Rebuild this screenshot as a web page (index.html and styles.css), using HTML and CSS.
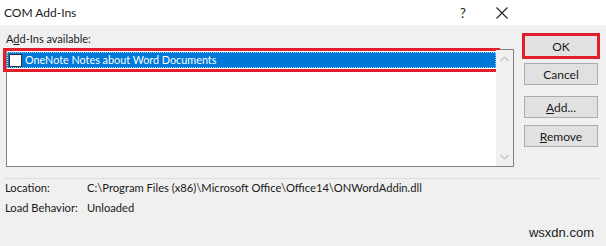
FILE: index.html
```html
<!DOCTYPE html>
<html lang="en">
<head>
  <meta charset="UTF-8">
  <title>COM Add-Ins</title>
  <link rel="stylesheet" href="styles.css">
</head>
<body>

  <div class="dialog">
    <header class="titlebar">
      <span class="title">COM Add-Ins</span>
      <span class="help">?</span>
      <span class="close">
        <svg width="12" height="12" viewBox="0 0 12 12"><path d="M0.5 0.5 L11.5 11.5 M11.5 0.5 L0.5 11.5" stroke="#222" stroke-width="1.1" fill="none"/></svg>
      </span>
    </header>

    <div class="main">
      <div class="list-col">
        <div class="list-label">A<u>d</u>d-Ins available:</div>
        <div class="listbox">
          <div class="items">
            <div class="item selected">
              <span class="check"></span>
              <span class="item-text">OneNote Notes about Word Documents</span>
            </div>
          </div>
          <div class="scrollbar">
            <svg width="9" height="6" viewBox="0 0 9 6"><path d="M0.5 5 L4.5 1 L8.5 5" stroke="#c2c2c2" stroke-width="1.2" fill="none"/></svg>
            <svg width="9" height="6" viewBox="0 0 9 6"><path d="M0.5 1 L4.5 5 L8.5 1" stroke="#c2c2c2" stroke-width="1.2" fill="none"/></svg>
          </div>
        </div>
      </div>

      <div class="buttons">
        <button class="btn btn-ok">OK</button>
        <button class="btn btn-cancel">Cancel</button>
        <button class="btn btn-add"><u>A</u>dd...</button>
        <button class="btn btn-remove"><u>R</u>emove</button>
      </div>
    </div>

    <hr class="sep">

    <div class="info">
      <span class="info-label">Location:</span>
      <span class="info-value">C:\Program Files (x86)\Microsoft Office\Office14\ONWordAddin.dll</span>
      <span class="info-label">Load Behavior:</span>
      <span class="info-value">Unloaded</span>
    </div>

    <div class="watermark">wsxdn.com</div>
  </div>

</body>
</html>
```

FILE: styles.css
```css
body {
  margin: 0;
  background-color: #f0f0f0;
  font-family: Lato, "Noto Sans", sans-serif;
  font-size: 11px;
  color: #1a1a1a;
}

.dialog {
  width: 606px;
  height: 246px;
  overflow: hidden;
}

.titlebar {
  height: 25px;
  background-color: #fff;
  display: flex;
  align-items: center;
  padding-left: 4px;
}

.title {
  flex: 1;
  font-size: 12px;
}

.help {
  width: 12px;
  margin-right: 24px;
  font-size: 13px;
}

.close {
  display: flex;
  margin-right: 98px;
}

.main {
  display: flex;
  padding: 6px 8px 0 6px;
  gap: 10px;
}

.list-col {
  display: flex;
  flex-direction: column;
}

.list-label {
  height: 18px;
  line-height: 16px;
  font-size: 11px;
}

.listbox {
  width: 506px;
  height: 116px;
  border: 1px solid #838383;
  background-color: #fff;
  display: flex;
}

.items {
  flex: 1;
  padding-top: 2px;
}

.item {
  height: 14px;
  display: flex;
  align-items: center;
  color: #fff;
}

.item.selected {
  background-color: #0078d7;
  border: 1px dotted #a7cdf2;
  outline: 3px solid #e01e2c;
  outline-offset: 1px;
}

.check {
  width: 13px;
  height: 13px;
  box-sizing: border-box;
  border: 1px solid #333;
  background-color: #fff;
  margin: 0 3px 0 1px;
}

.item-text {
  line-height: 14px;
  font-size: 10.8px;
}

.scrollbar {
  width: 17px;
  background-color: #f0f0f0;
  display: flex;
  flex-direction: column;
  justify-content: space-between;
  align-items: center;
  padding: 6px 0 6px;
}

.buttons {
  display: flex;
  flex-direction: column;
  padding-top: 4px;
}

.btn {
  width: 74px;
  height: 22px;
  margin: 0;
  padding: 0;
  border: 1px solid #adadad;
  background-color: #e1e1e1;
  font-family: inherit;
  font-size: 12px;
  color: #1a1a1a;
}

.btn-ok {
  border-color: #0078d7;
  outline: 3px solid #e01e2c;
  outline-offset: -1px;
}

.btn-cancel {
  margin-top: 6px;
}

.btn-add {
  margin-top: 11px;
}

.btn-remove {
  margin-top: 7px;
}

.sep {
  margin: 11px 6px 0 5px;
  border: none;
  border-top: 1px solid #dcdcdc;
}

.info {
  display: grid;
  grid-template-columns: 82px auto;
  row-gap: 4px;
  padding: 1px 0 0 5px;
  line-height: 16px;
  font-size: 11.2px;
  white-space: nowrap;
}

.watermark {
  text-align: right;
  padding: 9px 12px 0 0;
  line-height: 16px;
  font-family: "Liberation Sans", Arial, sans-serif;
  font-size: 13px;
  color: #222;
}
```
